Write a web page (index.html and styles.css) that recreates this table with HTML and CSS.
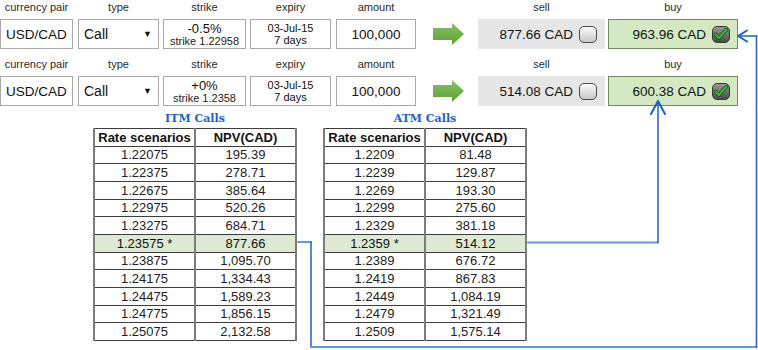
FILE: index.html
```html
<!DOCTYPE html>
<html>
<head>
<meta charset="utf-8">
<link rel="stylesheet" href="styles.css">
</head>
<body>
<div class="page">
  <div class="trades">
    <div class="trade">
      <div class="field f-pair"><div class="label">currency pair</div><div class="box center big">USD/CAD</div></div>
      <div class="field f-type"><div class="label">type</div><div class="box select big"><span>Call</span><span class="caret">&#9660;</span></div></div>
      <div class="field f-strike"><div class="label">strike</div><div class="box stack"><span class="pct">-0.5%</span><span class="sub">strike 1.22958</span></div></div>
      <div class="field f-expiry"><div class="label">expiry</div><div class="box stack"><span class="dt">03-Jul-15</span><span class="dt">7 days</span></div></div>
      <div class="field f-amount"><div class="label">amount</div><div class="box center big">100,000</div></div>
      <div class="field f-arrow"><div class="label"></div><div class="arrowbox"><svg width="31" height="22" viewBox="0 0 31 22"><defs><linearGradient id="ga1" x1="0" y1="0" x2="0" y2="1"><stop offset="0" stop-color="#84c35c"/><stop offset="1" stop-color="#5f9f3b"/></linearGradient></defs><polygon points="0,5 19,5 19,0 31,11 19,22 19,17 0,17" fill="url(#ga1)"/></svg></div></div>
      <div class="field f-sell"><div class="label">sell</div><div class="box quote sell big"><span>877.66 CAD</span><span class="cb"></span></div></div>
      <div class="field f-buy"><div class="label">buy</div><div class="box quote buy big"><span>963.96 CAD</span><span class="cb on"><svg width="14" height="12" viewBox="0 0 14 12"><path d="M1.5 6.5 L5 10 L12.5 1.5" fill="none" stroke="#1f4a1f" stroke-width="3.6" stroke-linecap="round" stroke-linejoin="round"/><path d="M1.5 6.5 L5 10 L12.5 1.5" fill="none" stroke="#33c233" stroke-width="2" stroke-linecap="round" stroke-linejoin="round"/></svg></span></div></div>
    </div>
    <div class="trade">
      <div class="field f-pair"><div class="label">currency pair</div><div class="box center big">USD/CAD</div></div>
      <div class="field f-type"><div class="label">type</div><div class="box select big"><span>Call</span><span class="caret">&#9660;</span></div></div>
      <div class="field f-strike"><div class="label">strike</div><div class="box stack"><span class="pct">+0%</span><span class="sub">strike 1.2358</span></div></div>
      <div class="field f-expiry"><div class="label">expiry</div><div class="box stack"><span class="dt">03-Jul-15</span><span class="dt">7 days</span></div></div>
      <div class="field f-amount"><div class="label">amount</div><div class="box center big">100,000</div></div>
      <div class="field f-arrow"><div class="label"></div><div class="arrowbox"><svg width="31" height="22" viewBox="0 0 31 22"><defs><linearGradient id="ga2" x1="0" y1="0" x2="0" y2="1"><stop offset="0" stop-color="#84c35c"/><stop offset="1" stop-color="#5f9f3b"/></linearGradient></defs><polygon points="0,5 19,5 19,0 31,11 19,22 19,17 0,17" fill="url(#ga2)"/></svg></div></div>
      <div class="field f-sell"><div class="label">sell</div><div class="box quote sell big"><span>514.08 CAD</span><span class="cb"></span></div></div>
      <div class="field f-buy"><div class="label">buy</div><div class="box quote buy big"><span>600.38 CAD</span><span class="cb on"><svg width="14" height="12" viewBox="0 0 14 12"><path d="M1.5 6.5 L5 10 L12.5 1.5" fill="none" stroke="#1f4a1f" stroke-width="3.6" stroke-linecap="round" stroke-linejoin="round"/><path d="M1.5 6.5 L5 10 L12.5 1.5" fill="none" stroke="#33c233" stroke-width="2" stroke-linecap="round" stroke-linejoin="round"/></svg></span></div></div>
    </div>
  </div>

  <div class="tables">
    <div class="tcol">
      <div class="title">ITM Calls</div>
      <table class="scen">
        <tr><th>Rate scenarios</th><th>NPV(CAD)</th></tr>
        <tr><td>1.22075</td><td>195.39</td></tr>
        <tr><td>1.22375</td><td>278.71</td></tr>
        <tr><td>1.22675</td><td>385.64</td></tr>
        <tr><td>1.22975</td><td>520.26</td></tr>
        <tr><td>1.23275</td><td>684.71</td></tr>
        <tr class="hl"><td>1.23575 *</td><td>877.66</td></tr>
        <tr><td>1.23875</td><td>1,095.70</td></tr>
        <tr><td>1.24175</td><td>1,334.43</td></tr>
        <tr><td>1.24475</td><td>1,589.23</td></tr>
        <tr><td>1.24775</td><td>1,856.15</td></tr>
        <tr><td>1.25075</td><td>2,132.58</td></tr>
      </table>
    </div>
    <div class="tcol">
      <div class="title">ATM Calls</div>
      <table class="scen">
        <tr><th>Rate scenarios</th><th>NPV(CAD)</th></tr>
        <tr><td>1.2209</td><td>81.48</td></tr>
        <tr><td>1.2239</td><td>129.87</td></tr>
        <tr><td>1.2269</td><td>193.30</td></tr>
        <tr><td>1.2299</td><td>275.60</td></tr>
        <tr><td>1.2329</td><td>381.18</td></tr>
        <tr class="hl"><td>1.2359 *</td><td>514.12</td></tr>
        <tr><td>1.2389</td><td>676.72</td></tr>
        <tr><td>1.2419</td><td>867.83</td></tr>
        <tr><td>1.2449</td><td>1,084.19</td></tr>
        <tr><td>1.2479</td><td>1,321.49</td></tr>
        <tr><td>1.2509</td><td>1,575.14</td></tr>
      </table>
    </div>
  </div>

  <svg class="links" width="758" height="350" viewBox="0 0 758 350">
    <g fill="none" stroke-linecap="round" stroke-linejoin="round">
      <path d="M298 242 H311" stroke="#5a9be2" stroke-width="2"/>
      <path d="M311 242 V347" stroke="#1c5fcf" stroke-width="1.5"/>
      <path d="M311 347 H756.5" stroke="#5a9be2" stroke-width="2"/>
      <path d="M756.5 347 V36" stroke="#1c5fcf" stroke-width="1.5"/>
      <path d="M756.5 36 H738" stroke="#1c5fcf" stroke-width="1.5"/>
      <path d="M747 30.5 L738 36 L747 41.5" stroke="#1c5fcf" stroke-width="2"/>
      <path d="M528 242.5 H658" stroke="#5a9be2" stroke-width="2"/>
      <path d="M658 242.5 V101" stroke="#1c5fcf" stroke-width="1.5"/>
      <path d="M651 114 L658 101 L665 114" stroke="#1c5fcf" stroke-width="2"/>
    </g>
  </svg>
</div>
</body>
</html>
```

FILE: styles.css
```css
* { box-sizing: border-box; }
html, body { margin: 0; padding: 0; background: #fff; }
body {
  font-family: "Liberation Sans", Arial, sans-serif;
  color: #111;
  width: 758px;
  height: 350px;
  overflow: hidden;
}
.page { position: relative; width: 758px; height: 350px; }

.trades { display: flex; flex-direction: column; gap: 9px; padding-top: 1px; }
.trade { display: flex; align-items: flex-end; }
.field { display: flex; flex-direction: column; align-items: center; }
.label {
  font-size: 11px;
  line-height: 12px;
  height: 12px;
  margin-bottom: 6px;
  color: #2a2a2a;
  white-space: nowrap;
}
.box {
  width: 100%;
  height: 30px;
  border: 1px solid #a9a9a9;
  background: #fff;
  display: flex;
  align-items: center;
}
.big { font-size: 13.5px; }
.center { justify-content: center; }
.select { justify-content: space-between; padding: 0 6px 0 5px; font-size: 14px; }
.caret { font-size: 9px; color: #111; }
.stack { flex-direction: column; justify-content: center; line-height: 12px; }
.pct { font-size: 13px; line-height: 13px; }
.sub { font-size: 11px; line-height: 12px; color: #222; }
.dt { font-size: 11px; line-height: 12px; }

.f-pair { width: 73px; }
.f-type { width: 81px; margin-left: 5px; }
.f-strike { width: 83px; margin-left: 4px; }
.f-expiry { width: 81px; margin-left: 4px; }
.f-amount { width: 80px; margin-left: 5px; }
.f-arrow { width: 62px; }
.f-sell { width: 127px; }
.f-buy { width: 130px; margin-left: 3px; }

.arrowbox { height: 30px; display: flex; align-items: center; justify-content: center; padding-left: 3px; }

.quote { justify-content: flex-end; gap: 6px; padding-right: 7px; }
.sell { background: #e6e6e6; border-color: #e6e6e6; }
.buy { background: #d4e9c1; border-color: #6f8d5b; }
.cb {
  width: 18px;
  height: 17px;
  border: 1px solid #4a4a4a;
  border-radius: 5px;
  background: linear-gradient(#fbfbfb, #c8c8c8);
  display: flex;
  align-items: center;
  justify-content: center;
}
.cb.on {
  background: linear-gradient(#9a9a9a, #4a4a4a);
  border-color: #333;
}

.tables { display: flex; gap: 26px; padding-left: 93px; margin-top: 7px; }
.tcol { width: 204px; }
.title {
  font-family: "DejaVu Serif", serif;
  font-weight: bold;
  font-size: 11px;
  line-height: 12px;
  height: 12px;
  margin-bottom: 3px;
  text-align: center;
  color: #1a60d6;
}
.scen { width: 204px; border-collapse: collapse; font-size: 13px; color: #222; }
.scen th, .scen td {
  height: 17.67px;
  padding: 0;
  text-align: center;
  line-height: 15px;
  border-top: 1px solid #3d3d3d;
  border-bottom: 1px solid #3d3d3d;
  border-left: 2px solid #7c7c7c;
  border-right: 2px solid #7c7c7c;
}
.scen th { font-weight: bold; color: #111; }
.scen th:first-child, .scen td:first-child { width: 101px; }
.scen tr.hl td { background: #dde9d3; color: #111; }

.links { position: absolute; left: 0; top: 0; pointer-events: none; }
```
